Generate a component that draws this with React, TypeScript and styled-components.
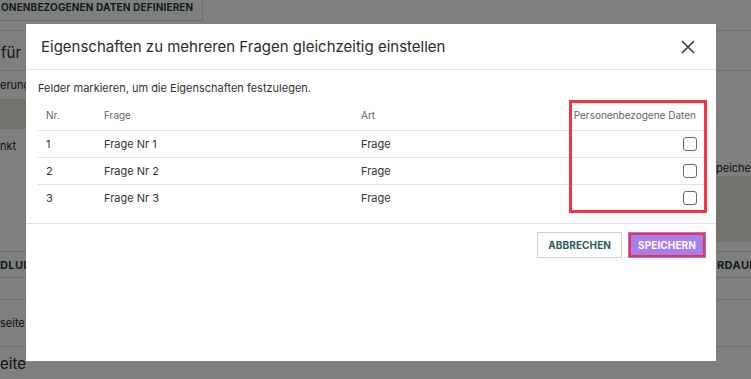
import React from "react";
import styled, { createGlobalStyle } from "styled-components";

const Global = createGlobalStyle`
  html, body { margin: 0; padding: 0; background: #fff; overflow: hidden; }
  body { font-family: Inter, "Noto Sans", sans-serif; color: #222; }
  * { box-sizing: border-box; }
`;

/* ---------- page behind the dialog ---------- */
const Page = styled.div`
  width: 751px;
  height: 379px;
  overflow: hidden;
  display: flex;
  flex-direction: column;
`;

const TopBar = styled.div`
  height: 31px;
  border-bottom: 1px solid #dcdcdc;
  display: flex;
  align-items: flex-start;
`;

const PageButton = styled.div`
  height: 21px;
  width: 203px;
  border-right: 1px solid #d6d6d6;
  border-bottom: 1px solid #d6d6d6;
  display: flex;
  align-items: flex-start;
  padding: 1px 0 0 1px;
  font-size: 10px;
  font-weight: 700;
  letter-spacing: 0.15px;
  color: #1e3e3e;
  white-space: nowrap;
  overflow: hidden;
`;

const TitleRow = styled.div`
  height: 41px;
  border-bottom: 1px solid #dcdcdc;
  display: flex;
  align-items: center;
  font-size: 15px;
  padding: 4px 0 0 1px;
  white-space: nowrap;
`;

const Split = styled.div`
  height: 180px;
  display: flex;
  justify-content: space-between;
`;

const Column = styled.div<{ $w: number }>`
  width: ${(p) => p.$w}px;
  display: flex;
  flex-direction: column;
  overflow: hidden;
`;

const SmallText = styled.div<{ $h: number; $align?: string }>`
  height: ${(p) => p.$h}px;
  display: flex;
  align-items: ${(p) => p.$align || "center"};
  font-size: 11px;
  white-space: nowrap;
`;

const Band = styled.div<{ $h: number }>`
  height: ${(p) => p.$h}px;
  background: #e8e8de;
  border-bottom: 1px solid #dcdcdc;
  flex-shrink: 0;
`;

const Row = styled.div<{ $h: number; $size?: number; $bold?: boolean; $line?: string }>`
  height: ${(p) => p.$h}px;
  border-bottom: 1px solid ${(p) => p.$line || "#dcdcdc"};
  display: flex;
  justify-content: space-between;
  align-items: center;
  font-size: ${(p) => p.$size || 11}px;
  font-weight: ${(p) => (p.$bold ? 700 : 400)};
  color: ${(p) => (p.$bold ? "#1e3e3e" : "#222")};
  letter-spacing: ${(p) => (p.$bold ? "0.4px" : "0")};
  white-space: nowrap;
  flex-shrink: 0;
`;

const RightFrag = styled.span`
  width: 34px;
  overflow: hidden;
`;

/* ---------- dialog ---------- */
const Overlay = styled.div`
  position: fixed;
  inset: 0;
  background: rgba(0, 0, 0, 0.5);
  display: flex;
  align-items: flex-start;
  padding: 24px 0 0 26px;
`;

const Modal = styled.div`
  width: 690px;
  height: 337px;
  background: #fff;
  display: flex;
  flex-direction: column;
`;

const Header = styled.div`
  height: 46px;
  border-bottom: 1px solid #e2e2e2;
  display: flex;
  align-items: center;
  justify-content: space-between;
  padding: 0 20px 0 15px;
  flex-shrink: 0;
`;

const Title = styled.h2`
  margin: 0;
  font-size: 15px;
  font-weight: 400;
  color: #2b2b2b;
`;

const CloseButton = styled.button`
  border: 0;
  background: none;
  padding: 0;
  width: 16px;
  height: 16px;
  display: flex;
  align-items: center;
  justify-content: center;
  cursor: pointer;
`;

const Body = styled.div`
  padding: 11px 10px 12px 12px;
  border-bottom: 1px solid #e2e2e2;
`;

const Hint = styled.p`
  margin: 0 0 5px 0;
  font-size: 11px;
  line-height: 14px;
  color: #333;
`;

const TableWrap = styled.div`
  position: relative;
`;

const Table = styled.table`
  width: 100%;
  border-collapse: collapse;
  table-layout: fixed;
`;

const Th = styled.th<{ $w?: number; $right?: boolean }>`
  ${(p) => (p.$w ? `width: ${p.$w}px;` : "")}
  height: 30px;
  padding: 0 ${(p) => (p.$right ? "10px" : "8px")} 0 ${(p) => (p.$right ? "0" : "8px")};
  text-align: ${(p) => (p.$right ? "right" : "left")};
  font-size: 10px;
  font-weight: 400;
  color: #666;
  white-space: nowrap;
`;

const Td = styled.td<{ $right?: boolean }>`
  height: 27px;
  border-top: 1px solid #e2e2e2;
  padding: 0 ${(p) => (p.$right ? "9px" : "8px")} 0 8px;
  text-align: ${(p) => (p.$right ? "right" : "left")};
  font-size: 11px;
  color: #333;
  vertical-align: middle;
`;

const Check = styled.span`
  display: inline-block;
  width: 14px;
  height: 14px;
  border: 1.5px solid #6a6a6a;
  border-radius: 3px;
  vertical-align: middle;
`;

const Highlight = styled.div`
  position: absolute;
  top: 0;
  left: 531px;
  right: -1px;
  bottom: -2px;
  border: 3px solid #f3343f;
  pointer-events: none;
`;

const Footer = styled.div`
  display: flex;
  justify-content: flex-end;
  gap: 7px;
  padding: 8px 10px;
`;

const Button = styled.button<{ $primary?: boolean }>`
  height: 26px;
  padding: 0 ${(p) => (p.$primary ? "7px" : "10px")};
  font-family: Inter, "Noto Sans", sans-serif;
  font-size: 10px;
  font-weight: 700;
  letter-spacing: 0.1px;
  cursor: pointer;
  ${(p) =>
    p.$primary
      ? `
    background: #a47ff0;
    color: #fff;
    border: 2px solid #f2303f;
    box-shadow: 0 0 0 1px #a07ce8;
    height: 24px;
    margin: 1px 1px 1px 0;
  `
      : `
    background: #fff;
    color: #2c5c58;
    border: 1px solid #c9dbb6;
  `}
`;

const rows = [
  { nr: 1, frage: "Frage Nr 1", art: "Frage" },
  { nr: 2, frage: "Frage Nr 2", art: "Frage" },
  { nr: 3, frage: "Frage Nr 3", art: "Frage" },
];

export default function App() {
  return (
    <>
      <Global />
      <Page>
        <TopBar>
          <PageButton>ONENBEZOGENEN DATEN DEFINIEREN</PageButton>
        </TopBar>
        <TitleRow>für E</TitleRow>
        <Split>
          <Column $w={60}>
            <SmallText $h={28}>erung</SmallText>
            <Band $h={30} />
            <SmallText $h={122} $align="flex-start" style={{ paddingTop: 10 }}>
              nkt
            </SmallText>
          </Column>
          <Column $w={35}>
            <SmallText $h={105} $align="flex-end" style={{ paddingBottom: 1 }}>
              peichern
            </SmallText>
            <Band $h={66} />
          </Column>
        </Split>
        <Row $h={27} $bold $line="#d5dbc8" style={{ borderTop: "1px solid #d5dbc8" }}>
          <span>DLUN</span>
          <RightFrag>RDAUER</RightFrag>
        </Row>
        <Row $h={22} />
        <Row $h={47}>
          <span>seite a</span>
        </Row>
        <Row $h={32} $size={15} style={{ borderBottom: 0 }}>
          <span>eite</span>
        </Row>
      </Page>

      <Overlay>
        <Modal role="dialog">
          <Header>
            <Title>Eigenschaften zu mehreren Fragen gleichzeitig einstellen</Title>
            <CloseButton aria-label="Schließen">
              <svg width="14" height="14" viewBox="0 0 14 14">
                <path d="M1 1 L13 13 M13 1 L1 13" stroke="#1d4747" strokeWidth="1.6" fill="none" />
              </svg>
            </CloseButton>
          </Header>
          <Body>
            <Hint>Felder markieren, um die Eigenschaften festzulegen.</Hint>
            <TableWrap>
              <Table>
                <thead>
                  <tr>
                    <Th $w={58}>Nr.</Th>
                    <Th $w={257}>Frage</Th>
                    <Th $w={216}>Art</Th>
                    <Th $right>Personenbezogene Daten</Th>
                  </tr>
                </thead>
                <tbody>
                  {rows.map((r) => (
                    <tr key={r.nr}>
                      <Td>{r.nr}</Td>
                      <Td>{r.frage}</Td>
                      <Td>{r.art}</Td>
                      <Td $right>
                        <Check />
                      </Td>
                    </tr>
                  ))}
                </tbody>
              </Table>
              <Highlight />
            </TableWrap>
          </Body>
          <Footer>
            <Button>ABBRECHEN</Button>
            <Button $primary>SPEICHERN</Button>
          </Footer>
        </Modal>
      </Overlay>
    </>
  );
}
